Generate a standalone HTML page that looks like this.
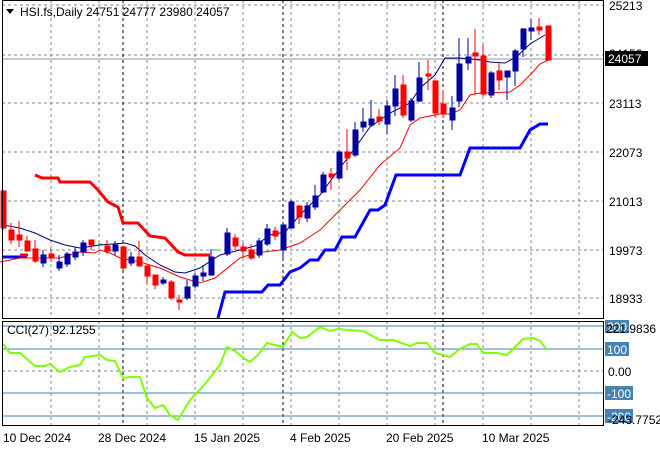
<!DOCTYPE html>
<html><head><meta charset="utf-8"><style>
body{margin:0;background:#fff;width:660px;height:450px;overflow:hidden}
svg{display:block;font-family:"Liberation Sans",sans-serif}
</style></head><body>
<svg width="660" height="450" xmlns="http://www.w3.org/2000/svg">
<rect width="660" height="450" fill="#fff"/>
<g stroke="#7f8a96" stroke-dasharray="3,3" stroke-width="1">
<path d="M51 0V318M99 0V318M147 0V318M195 0V318M243 0V318M291 0V318M339 0V318M387 0V318M435 0V318M483 0V318M531 0V318M579 0V318"/>
<path d="M51 321V426M99 321V426M147 321V426M195 321V426M243 321V426M291 321V426M339 321V426M387 321V426M435 321V426M483 321V426M531 321V426M579 321V426"/>
<path d="M2 5H604M2 55H604M2 103H604M2 152H604M2 201H604M2 250H604M2 298H604M2 371H604"/>
</g>
<g stroke="#000" stroke-dasharray="3,3"><path d="M123 0V426M283 0V426M443 0V426"/></g>
<path d="M2 59H604" stroke="#8c96a0"/>
<g stroke="#4682b4"><path d="M2 326H604M2 349H604M2 393H604M2 416H604"/></g>
<g fill="none" stroke-width="3">
<path d="M2 257H27" stroke="#0000ff"/>
<path d="M20 255H28" stroke="#ff0000"/>
<path d="M35 175L42 178H58L60 182H90L98 190L108 202L118 207L123 223H138L150 236L165 238L178 252L185 255H210" stroke="#ff0000"/>
<path d="M218 318L225 292H262L268 285H280L290 272L300 268L310 260H318L325 250H335L342 237H355L370 210H378L385 205L396 175H460L470 148H520L530 130L540 124H548" stroke="#0000ff"/>
</g>
<path d="M98 244h4M215 250h4" stroke="#00dd00"/>
<path fill="none" stroke="#000080" d="M3 225L20 228L35 233L50 240L65 245L80 248L100 245L125 243L135 246L145 255L160 265L175 272L185 273L200 268L220 255L240 250L255 246L270 235L285 232L300 215L320 195L340 168L355 148L370 127L390 113L410 103L420 88L435 75L445 58L460 58L480 60L490 62L505 63L515 58L530 44L545 35"/>
<path fill="none" stroke="#ff0000" d="M0 262L20 258L60 258L70 255L80 252L95 253L100 250L110 253L120 258L140 262L160 268L180 277L200 283L215 278L240 258L255 253L280 250L300 243L320 230L340 210L360 190L380 165L400 148L410 125L420 118L440 114L450 114L460 110L470 95L480 93L510 92L520 85L530 75L540 64L548 60"/>
<g stroke-width="1">
<g stroke="#ff0000" fill="#ff0000">
<path d="M3 190V230M11 223V244M19 221V247M27 236V252M35 240V263M51 249V262M91 240V250M107 240V254M123 247V270M139 241V266M147 264V284M155 275V289M171 280V300M179 295V310M235 234V250M243 243V258M251 244V260M275 227V240M299 205V224M331 168V190M347 129V170M379 109V125M403 75V118M428 60V90M435 80V118M443 90V118M475 29V94M483 45V96M499 62V90M539 18V35M548 26V60"/>
<rect x="1" y="191" width="5" height="37"/><rect x="9" y="230" width="5" height="10"/><rect x="17" y="235" width="5" height="5"/><rect x="25" y="241" width="5" height="10"/><rect x="33" y="249" width="5" height="12"/><rect x="49" y="254" width="5" height="3"/><rect x="89" y="240" width="5" height="5"/><rect x="105" y="246" width="5" height="5"/><rect x="121" y="247" width="5" height="21"/><rect x="137" y="257" width="5" height="9"/><rect x="145" y="266" width="5" height="10"/><rect x="153" y="275" width="5" height="10"/><rect x="169" y="282" width="5" height="16"/><rect x="177" y="300" width="5" height="2"/><rect x="233" y="238" width="5" height="8"/><rect x="241" y="247" width="5" height="4"/><rect x="249" y="250" width="5" height="8"/><rect x="273" y="231" width="5" height="5"/><rect x="297" y="206" width="5" height="11"/><rect x="329" y="174" width="5" height="3"/><rect x="345" y="152" width="5" height="6"/><rect x="377" y="117" width="5" height="4"/><rect x="401" y="85" width="5" height="30"/><rect x="426" y="74" width="5" height="2"/><rect x="433" y="81" width="5" height="32"/><rect x="441" y="104" width="5" height="10"/><rect x="473" y="53" width="5" height="3"/><rect x="481" y="56" width="5" height="38"/><rect x="497" y="71" width="5" height="9"/><rect x="537" y="27" width="5" height="3"/><rect x="546" y="26" width="5" height="34"/>
</g>
<g stroke="#0000a0" fill="#0000a0">
<path d="M43 250V267M59 255V271M67 252V267M75 247V260M83 240V256M115 241V255M131 252V266M163 277V285M187 280V300M195 273V288M203 265V281M211 249V276M227 228V256M259 238V258M267 224V246M283 222V260M291 200V228M307 202V222M315 185V210M323 172V193M339 150V180M355 122V157M363 108V132M371 100V127M387 100V134M395 75V116M411 98V122M419 62V102M452 96V130M459 38V107M468 38V70M491 71V98M507 71V100M515 49V86M523 28V57M531 19V40"/>
<rect x="41" y="255" width="5" height="8"/><rect x="57" y="262" width="5" height="6"/><rect x="65" y="254" width="5" height="10"/><rect x="73" y="252" width="5" height="5"/><rect x="81" y="243" width="5" height="9"/><rect x="113" y="245" width="5" height="6"/><rect x="129" y="257" width="5" height="6"/><rect x="161" y="280" width="5" height="3"/><rect x="185" y="287" width="5" height="11"/><rect x="193" y="276" width="5" height="10"/><rect x="201" y="273" width="5" height="3"/><rect x="209" y="257" width="5" height="18"/><rect x="225" y="233" width="5" height="21"/><rect x="257" y="241" width="5" height="14"/><rect x="265" y="229" width="5" height="15"/><rect x="281" y="225" width="5" height="25"/><rect x="289" y="202" width="5" height="26"/><rect x="305" y="206" width="5" height="12"/><rect x="313" y="196" width="5" height="11"/><rect x="321" y="175" width="5" height="17"/><rect x="337" y="152" width="5" height="26"/><rect x="353" y="130" width="5" height="25"/><rect x="361" y="122" width="5" height="5"/><rect x="369" y="119" width="5" height="6"/><rect x="385" y="106" width="5" height="18"/><rect x="393" y="89" width="5" height="17"/><rect x="409" y="101" width="5" height="19"/><rect x="417" y="78" width="5" height="23"/><rect x="450" y="108" width="5" height="12"/><rect x="457" y="64" width="5" height="37"/><rect x="466" y="57" width="5" height="6"/><rect x="489" y="73" width="5" height="22"/><rect x="505" y="71" width="5" height="6"/><rect x="513" y="51" width="5" height="20"/><rect x="521" y="29" width="5" height="20"/><rect x="529" y="28" width="5" height="3"/>
</g>
</g>
<path fill="none" stroke="#7fff00" stroke-width="2" d="M3 344L10 353L20 353L35 366L45 366L50 364L60 372L70 367L80 365L85 357L100 355L107 360L115 361L123 378L130 377L140 377L147 398L155 408L163 405L170 415L178 420L190 400L205 384L220 365L227 347L235 351L245 359L250 362L258 355L267 343L275 345L283 347L292 332L300 338L307 337L320 327L330 331L338 329L347 330L363 331L380 340L393 340L410 346L417 343L427 343L435 353L443 355L450 357L460 349L470 344L477 344L483 353L497 353L507 355L513 349L523 339L533 338L540 341L547 350"/>
<g fill="none" stroke="#000"><rect x="2.5" y="0.5" width="601" height="318"/><rect x="2.5" y="321.5" width="601" height="104"/></g>
<path d="M6 9l8 0l-4 5z" fill="#000"/>
<text x="20" y="16" font-size="12" fill="#000">HSI.fs,Daily  24751 24777 23980 24057</text>
<text x="7" y="334" font-size="12" fill="#000">CCI(27) 92.1255</text>
<g font-size="12" fill="#000">
<text x="609" y="10">25213</text><text x="609" y="58">24153</text><text x="609" y="108">23113</text><text x="609" y="157">22073</text><text x="609" y="206">21013</text><text x="609" y="255">19973</text><text x="609" y="303">18933</text>
</g>
<rect x="605" y="51" width="43" height="15" fill="#000"/>
<text x="608" y="63" font-size="12" fill="#fff">24057</text>
<g fill="#4682b4"><rect x="605" y="320" width="24" height="13"/><rect x="605" y="342" width="24" height="14"/><rect x="605" y="386" width="28" height="14"/><rect x="605" y="409" width="28" height="14"/></g>
<g font-size="12" fill="#fff"><text x="607" y="331">200</text><text x="607" y="354">100</text><text x="607" y="398">-100</text><text x="607" y="421">-200</text></g>
<g font-size="12" fill="#000"><text x="606" y="333">221.9836</text><text x="608" y="376">0.00</text><text x="608" y="424">-243.7752</text></g>
<g font-size="12" fill="#000">
<text x="3" y="442">10 Dec 2024</text><text x="98" y="442">28 Dec 2024</text><text x="194" y="442">15 Jan 2025</text><text x="290" y="442">4 Feb 2025</text><text x="386" y="442">20 Feb 2025</text><text x="482" y="442">10 Mar 2025</text>
</g>
</svg>
</body></html>
